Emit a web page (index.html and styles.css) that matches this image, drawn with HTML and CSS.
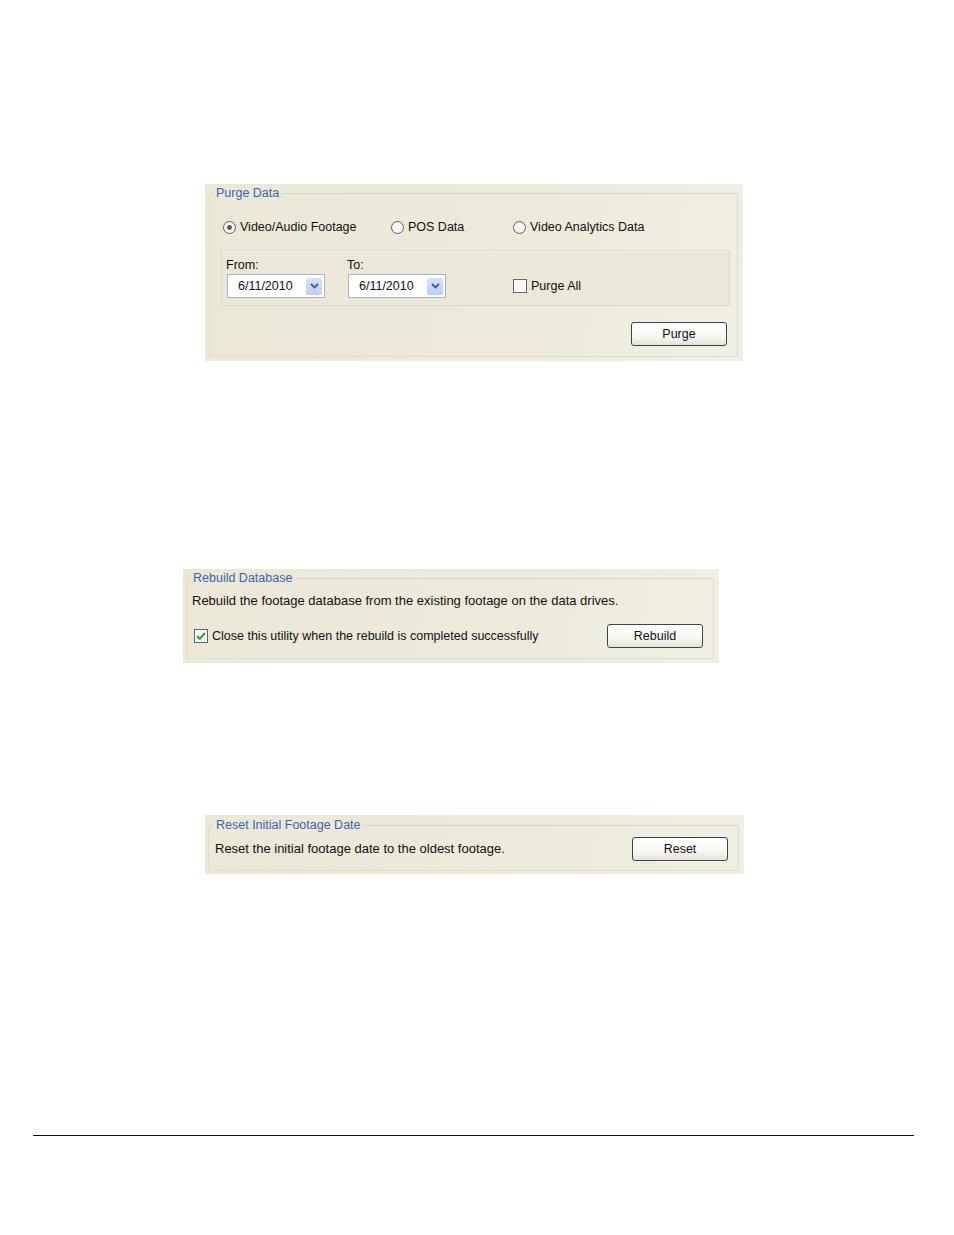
FILE: index.html
```html
<!DOCTYPE html>
<html>
<head>
<meta charset="utf-8">
<link rel="stylesheet" href="styles.css">
</head>
<body>
<div class="page">
  <div class="panel purge">
    <fieldset class="group">
      <legend class="legend">Purge Data</legend>
      <div class="radios">
        <label class="opt opt1">
          <svg class="radio" width="13" height="13" viewBox="0 0 13 13"><circle cx="6.5" cy="6.5" r="6" fill="#f6f6f2" stroke="#55606c"/><circle cx="6.5" cy="6.5" r="2.4" fill="#4c5a4c"/></svg>
          <span>Video/Audio Footage</span>
        </label>
        <label class="opt opt2">
          <svg class="radio" width="13" height="13" viewBox="0 0 13 13"><circle cx="6.5" cy="6.5" r="6" fill="#f6f6f2" stroke="#55606c"/></svg>
          <span>POS Data</span>
        </label>
        <label class="opt">
          <svg class="radio" width="13" height="13" viewBox="0 0 13 13"><circle cx="6.5" cy="6.5" r="6" fill="#f6f6f2" stroke="#55606c"/></svg>
          <span>Video Analytics Data</span>
        </label>
      </div>
      <div class="inner">
        <div class="col col-from">
          <div class="lbl">From:</div>
          <div class="combo"><span class="val">6/11/2010</span><span class="drop"><svg width="9" height="6" viewBox="0 0 9 6"><path d="M1 1 L4.5 4.5 L8 1" fill="none" stroke="#3d5a99" stroke-width="1.8"/></svg></span></div>
        </div>
        <div class="col col-to">
          <div class="lbl">To:</div>
          <div class="combo"><span class="val">6/11/2010</span><span class="drop"><svg width="9" height="6" viewBox="0 0 9 6"><path d="M1 1 L4.5 4.5 L8 1" fill="none" stroke="#3d5a99" stroke-width="1.8"/></svg></span></div>
        </div>
        <label class="chk-row purge-all">
          <svg class="box" width="14" height="14" viewBox="0 0 14 14"><rect x="0.5" y="0.5" width="13" height="13" fill="#f8f8f4" stroke="#5c6670"/></svg>
          <span>Purge All</span>
        </label>
      </div>
      <div class="actions">
        <button class="btn">Purge</button>
      </div>
    </fieldset>
  </div>

  <div class="panel rebuild">
    <fieldset class="group">
      <legend class="legend">Rebuild Database</legend>
      <div class="text">Rebuild the footage database from the existing footage on the data drives.</div>
      <div class="row">
        <label class="chk-row">
          <svg class="box" width="14" height="14" viewBox="0 0 14 14"><rect x="0.5" y="0.5" width="13" height="13" fill="#f8f8f4" stroke="#5c6670"/><path d="M3 7 L5.8 9.8 L11 4" fill="none" stroke="#2aa02a" stroke-width="2"/></svg>
          <span>Close this utility when the rebuild is completed successfully</span>
        </label>
        <button class="btn">Rebuild</button>
      </div>
    </fieldset>
  </div>

  <div class="panel reset">
    <fieldset class="group">
      <legend class="legend">Reset Initial Footage Date</legend>
      <div class="row">
        <div class="text">Reset the initial footage date to the oldest footage.</div>
        <button class="btn">Reset</button>
      </div>
    </fieldset>
  </div>

  <div class="rule"></div>
</div>
</body>
</html>
```

FILE: styles.css
```css
html, body {
  margin: 0;
  padding: 0;
  background: #ffffff;
}
body {
  font-family: "Liberation Sans", Arial, sans-serif;
  font-size: 12.5px;
  color: #111;
}
.page {
  display: flex;
  flex-direction: column;
  align-items: flex-start;
}
.panel {
  box-sizing: border-box;
  background: linear-gradient(100deg, #ebe8d8 0%, #edeadc 60%, #f1efe4 100%);
  overflow: hidden;
}
.group {
  margin: 0;
  min-width: 0;
  box-sizing: border-box;
  height: 100%;
  border: 1px solid #dfdccc;
  border-top-color: #d6d3c3;
  border-radius: 3px;
}
.legend {
  padding: 0 3px;
  line-height: 14px;
  color: #3a64b6;
  font-size: 12.5px;
}

/* Purge */
.purge {
  margin-top: 184px;
  margin-left: 205px;
  width: 538px;
  height: 177px;
  padding: 2px 5px 4px 4px;
}
.purge .group {
  padding: 19px 10px 0 12px;
}
.purge .legend { margin-left: -9px; }
.radios {
  display: flex;
  align-items: center;
  height: 16px;
  padding-left: 1px;
}
.opt {
  display: flex;
  align-items: center;
  gap: 4px;
  line-height: 16px;
}
.opt1 { width: 168px; }
.opt2 { width: 122px; }
.radio { flex: none; }

.inner {
  margin-top: 15px;
  margin-left: -1px;
  width: 509px;
  height: 56px;
  box-sizing: border-box;
  border: 1px solid #dddac9;
  box-shadow: inset 0 1px 0 #f6f4ec;
  border-radius: 2px;
  padding: 7px 0 0 4px;
  display: flex;
  align-items: flex-start;
  background: #ebe8d9;
}
.col { display: flex; flex-direction: column; }
.col-from { width: 121px; }
.col-to { width: 166px; }
.lbl { line-height: 14px; }
.combo {
  margin-top: 2px;
  margin-left: 1px;
  width: 98px;
  height: 24px;
  box-sizing: border-box;
  border: 1px solid #a5b4c6;
  background: #fff;
  display: flex;
  align-items: center;
  justify-content: space-between;
  padding: 0 2px 0 10px;
}
.drop {
  width: 16px;
  height: 17px;
  background: linear-gradient(#d6e2fb, #bccdf4);
  border-radius: 2px;
  display: flex;
  align-items: center;
  justify-content: center;
}
.chk-row {
  display: flex;
  align-items: center;
  gap: 4px;
  line-height: 16px;
}
.purge-all {
  align-self: flex-start;
  margin-top: 20px;
}
.box { flex: none; }
.actions {
  display: flex;
  justify-content: flex-end;
  margin-top: 16px;
}
.btn {
  width: 96px;
  height: 24px;
  box-sizing: border-box;
  border: 1px solid #3a4450;
  border-radius: 3px;
  background: linear-gradient(#ffffff 0%, #f7f7f3 60%, #e6e3d8 100%);
  font-family: "Liberation Sans", Arial, sans-serif;
  font-size: 12.5px;
  color: #111;
  padding: 0;
  flex: none;
}

/* Rebuild */
.rebuild {
  margin-top: 208px;
  margin-left: 183px;
  width: 536px;
  height: 94px;
  padding: 2px 5px 4px 3px;
}
.rebuild .group {
  padding: 9px 10px 0 5px;
}
.rebuild .legend { margin-left: -2px; }
.text { line-height: 14px; font-size: 13px; }
.row {
  display: flex;
  align-items: center;
  justify-content: space-between;
}
.rebuild .row {
  margin-top: 16px;
  padding-left: 2px;
}

/* Reset */
.reset {
  margin-top: 152px;
  margin-left: 205px;
  width: 539px;
  height: 59px;
  padding: 3px 5px 3px 3px;
}
.reset .group {
  padding: 5px 10px 0 6px;
}
.reset .legend { margin-left: -2px; }

.rule {
  margin-top: 261px;
  margin-left: 33px;
  width: 881px;
  height: 1px;
  background: #111;
}
```
